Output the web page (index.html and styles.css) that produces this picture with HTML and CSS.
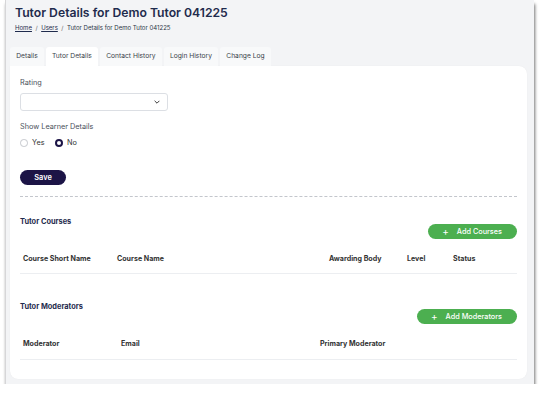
FILE: index.html
```html
<!DOCTYPE html>
<html>
<head>
<meta charset="utf-8">
<link rel="stylesheet" href="styles.css">
</head>
<body>
<div class="frame">
  <header class="page-head">
    <h1 class="title">Tutor Details for Demo Tutor 041225</h1>
    <nav class="crumbs"><a href="#">Home</a><span class="sep">/</span><a href="#">Users</a><span class="sep">/</span><span>Tutor Details for Demo Tutor 041225</span></nav>
  </header>
  <div class="tabs">
    <div class="tab">Details</div>
    <div class="tab active">Tutor Details</div>
    <div class="tab">Contact History</div>
    <div class="tab">Login History</div>
    <div class="tab">Change Log</div>
  </div>
  <main class="card">
    <div class="field">
      <label class="label">Rating</label>
      <div class="select">
        <svg class="chev" viewBox="0 0 10 6" width="6" height="4"><path d="M1 1l4 4 4-4" fill="none" stroke="#333" stroke-width="1.6"/></svg>
      </div>
    </div>
    <div class="field field-radio">
      <div class="label">Show Learner Details</div>
      <div class="radios">
        <span class="radio"><span class="dot"></span>Yes</span>
        <span class="radio"><span class="dot on"></span>No</span>
      </div>
    </div>
    <button class="btn-save">Save</button>
    <hr class="divider">
    <section class="section">
      <div class="sec-head">
        <h2 class="sec-title">Tutor Courses</h2>
        <button class="btn-add"><span class="plus">+</span>Add Courses</button>
      </div>
      <table class="grid">
        <thead><tr>
          <th class="c-short">Course Short Name</th>
          <th class="c-name">Course Name</th>
          <th class="c-body">Awarding Body</th>
          <th class="c-level">Level</th>
          <th>Status</th>
        </tr></thead>
      </table>
    </section>
    <section class="section mods">
      <div class="sec-head">
        <h2 class="sec-title">Tutor Moderators</h2>
        <button class="btn-add"><span class="plus">+</span>Add Moderators</button>
      </div>
      <table class="grid">
        <thead><tr>
          <th class="m-mod">Moderator</th>
          <th class="m-email">Email</th>
          <th>Primary Moderator</th>
        </tr></thead>
      </table>
    </section>
  </main>
</div>
</body>
</html>
```
FILE: styles.css
```css
* { box-sizing: border-box; }
html, body { margin: 0; padding: 0; background: #ffffff; }
body { font-family: Inter, "Noto Sans", sans-serif; color: #333; }

.frame {
  margin-left: 5px;
  width: 529px;
  height: 384px;
  background: #f3f4f6;
  border-left: 1px solid #d6d6d8;
  padding: 5px 0 0 4px;
  box-shadow: 1px 4px 3px rgba(0,0,0,0.55);
}

.page-head { padding-left: 5px; height: 42px; }
.title {
  margin: 0;
  font-size: 12.2px;
  line-height: 15px;
  font-weight: 600;
  color: #1f2b4d;
}
.crumbs {
  margin-top: 3px;
  font-size: 6.05px;
  line-height: 9px;
  color: #2d3748;
}
.crumbs a { color: #1f2b4d; text-decoration: underline; }
.crumbs .sep { margin: 0 3.5px; color: #666; }

.tabs {
  display: flex;
  gap: 2px;
  height: 19px;
}
.tab {
  padding: 0 6.2px;
  font-size: 6.7px;
  line-height: 19px;
  color: #3a3f4a;
  background: #f8f9fa;
  border-radius: 3px 3px 0 0;
}
.tab.active { background: #ffffff; }

.card {
  width: 517px;
  height: 313px;
  background: #ffffff;
  border-radius: 0 8px 8px 8px;
  padding: 11px 10px 0 10px;
  box-shadow: 0 0 1px rgba(0,0,0,0.08);
}

.label {
  display: block;
  font-size: 7.3px;
  line-height: 12px;
  height: 12px;
  color: #4a4f5a;
}
.field { display: flex; flex-direction: column; }
.select {
  margin-top: 4px;
  width: 148px;
  height: 18px;
  border: 1px solid #dcdfe4;
  border-radius: 3px;
  display: flex;
  align-items: center;
  justify-content: flex-end;
  padding-right: 7px;
}
.chev { display: block; }

.field-radio { margin-top: 10px; }
.radios {
  display: flex;
  gap: 10px;
  margin-top: 4px;
  height: 12px;
  font-size: 7.3px;
  line-height: 12px;
  color: #333;
}
.radio { display: flex; align-items: center; gap: 4.5px; }
.dot {
  width: 7.5px;
  height: 7.5px;
  border-radius: 50%;
  border: 1px solid #c4c7cc;
  background: #fff;
}
.dot.on { width: 8px; height: 8px; border: 2.3px solid #1c1446; }

.btn-save {
  display: block;
  margin-top: 20.5px;
  width: 46px;
  height: 15px;
  border: 0;
  border-radius: 7.5px;
  background: #1c1446;
  color: #fff;
  font-family: inherit;
  font-size: 7.4px;
  font-weight: 600;
  padding: 0;
}

.divider {
  margin: 11px 0 0;
  border: 0;
  border-top: 1px dashed #c3c6cc;
  height: 0;
}

.sec-head {
  display: flex;
  justify-content: space-between;
  align-items: flex-start;
  margin-top: 20.5px;
  height: 22px;
}
.sec-title {
  margin: 0;
  font-size: 7.4px;
  line-height: 10px;
  font-weight: 700;
  color: #1f2b4d;
}
.btn-add {
  margin-top: 6.5px;
  height: 15px;
  border: 0;
  border-radius: 7.5px;
  background: #4caf50;
  color: #fff;
  font-family: inherit;
  font-size: 7.3px;
  font-weight: 500;
  padding: 0 15px 0 14px;
  display: flex;
  align-items: center;
}
.plus { font-size: 10px; font-weight: 400; margin-right: 8px; line-height: 10px; }

.grid {
  width: 100%;
  border-collapse: collapse;
  table-layout: fixed;
  margin-top: 4.5px;
}
.grid th {
  text-align: left;
  font-size: 7.1px;
  font-weight: 700;
  color: #333;
  padding: 0 3px;
  height: 30px;
  border-bottom: 1px solid #eceef1;
}
.c-short { width: 94px; }
.c-name { width: 212px; }
.c-body { width: 78px; }
.c-level { width: 46px; }
.m-mod { width: 98px; }
.m-email { width: 199px; }

.mods .sec-head { margin-top: 28px; }
.mods .grid { margin-top: 5px; }
```
